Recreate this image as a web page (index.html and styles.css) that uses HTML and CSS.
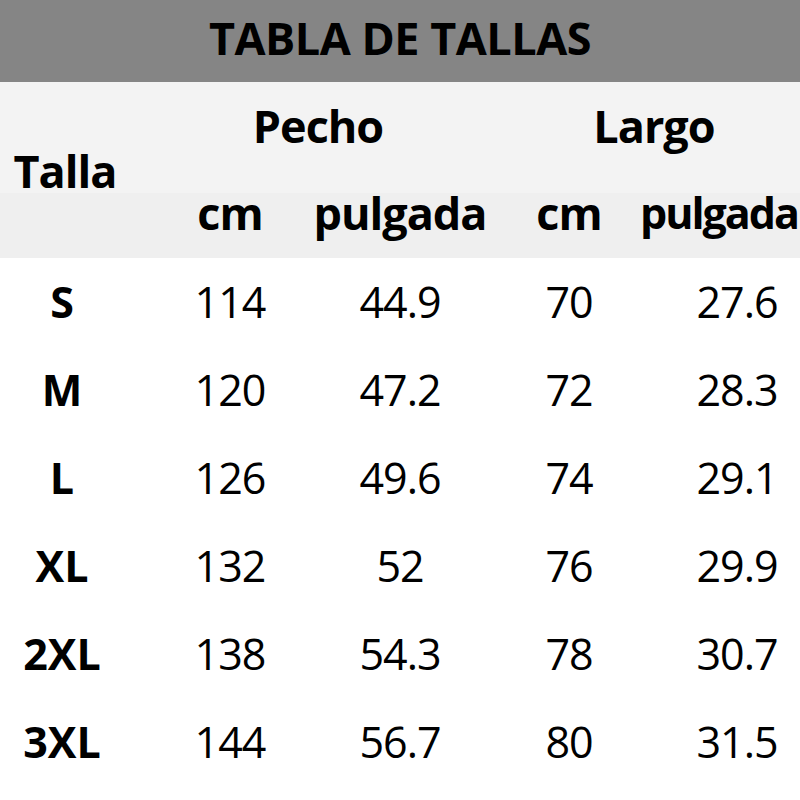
FILE: index.html
```html
<!DOCTYPE html>
<html lang="es">
<head>
<meta charset="utf-8">
<title>Tabla de tallas</title>
<link rel="stylesheet" href="styles.css">
</head>
<body>
<div class="page">
  <div class="title-bar"><h1 class="title">TABLA DE TALLAS</h1></div>
  <div class="head">
    <div class="hcell talla">Talla</div>
    <div class="hcell group pecho">Pecho</div>
    <div class="hcell group largo">Largo</div>
    <div class="hcell sub">cm</div>
    <div class="hcell sub">pulgada</div>
    <div class="hcell sub">cm</div>
    <div class="hcell sub last">pulgada</div>
  </div>
  <div class="body">
    <div class="row"><div class="cell size">S</div><div class="cell">114</div><div class="cell">44.9</div><div class="cell">70</div><div class="cell">27.6</div></div>
    <div class="row"><div class="cell size">M</div><div class="cell">120</div><div class="cell">47.2</div><div class="cell">72</div><div class="cell">28.3</div></div>
    <div class="row"><div class="cell size">L</div><div class="cell">126</div><div class="cell">49.6</div><div class="cell">74</div><div class="cell">29.1</div></div>
    <div class="row"><div class="cell size">XL</div><div class="cell">132</div><div class="cell">52</div><div class="cell">76</div><div class="cell">29.9</div></div>
    <div class="row"><div class="cell size">2XL</div><div class="cell">138</div><div class="cell">54.3</div><div class="cell">78</div><div class="cell">30.7</div></div>
    <div class="row"><div class="cell size">3XL</div><div class="cell">144</div><div class="cell">56.7</div><div class="cell">80</div><div class="cell">31.5</div></div>
  </div>
</div>
</body>
</html>
```
FILE: styles.css
```css
html, body {
  margin: 0;
  padding: 0;
  background: #ffffff;
}
body {
  font-family: "Open Sans", "Noto Sans", sans-serif;
  color: #000000;
  width: 800px;
  overflow: hidden;
}
.page {
  width: 800px;
}
.title-bar {
  height: 82px;
  box-sizing: border-box;
  padding-bottom: 7px;
  background: #858585;
  display: flex;
  align-items: center;
  justify-content: center;
}
.title {
  margin: 0;
  font-size: 45px;
  font-weight: 700;
  letter-spacing: -0.5px;
  line-height: normal;
}
.head {
  display: grid;
  grid-template-columns: 124px 212px 128px 210px 126px;
  grid-template-rows: 111px 65px;
  background: linear-gradient(to bottom, #f3f3f3 0, #f3f3f3 111px, #efefef 111px, #efefef 100%);
}
.hcell {
  display: flex;
  align-items: center;
  justify-content: center;
  box-sizing: border-box;
  font-size: 45px;
  font-weight: 700;
  letter-spacing: -1px;
  white-space: nowrap;
  line-height: normal;
}
.talla {
  grid-column: 1;
  grid-row: 1 / span 2;
  padding-left: 6px;
}
.group {
  padding-bottom: 24px;
}
.pecho {
  grid-column: 2 / span 2;
  padding-left: 48px;
}
.largo {
  grid-column: 4 / span 2;
  padding-left: 44px;
}
.sub {
  grid-row: 2;
  padding-bottom: 26px;
}
.sub.last {
  font-size: 43px;
  letter-spacing: -2px;
  padding-right: 36px;
}
.body {
  display: flex;
  flex-direction: column;
}
.row {
  display: grid;
  grid-template-columns: 124px 212px 128px 210px 126px;
  height: 88px;
}
.cell {
  font-size: 43px;
  line-height: 88px;
  text-align: center;
  letter-spacing: -1px;
  white-space: nowrap;
}
.size {
  font-weight: 700;
  letter-spacing: 0;
}
```
